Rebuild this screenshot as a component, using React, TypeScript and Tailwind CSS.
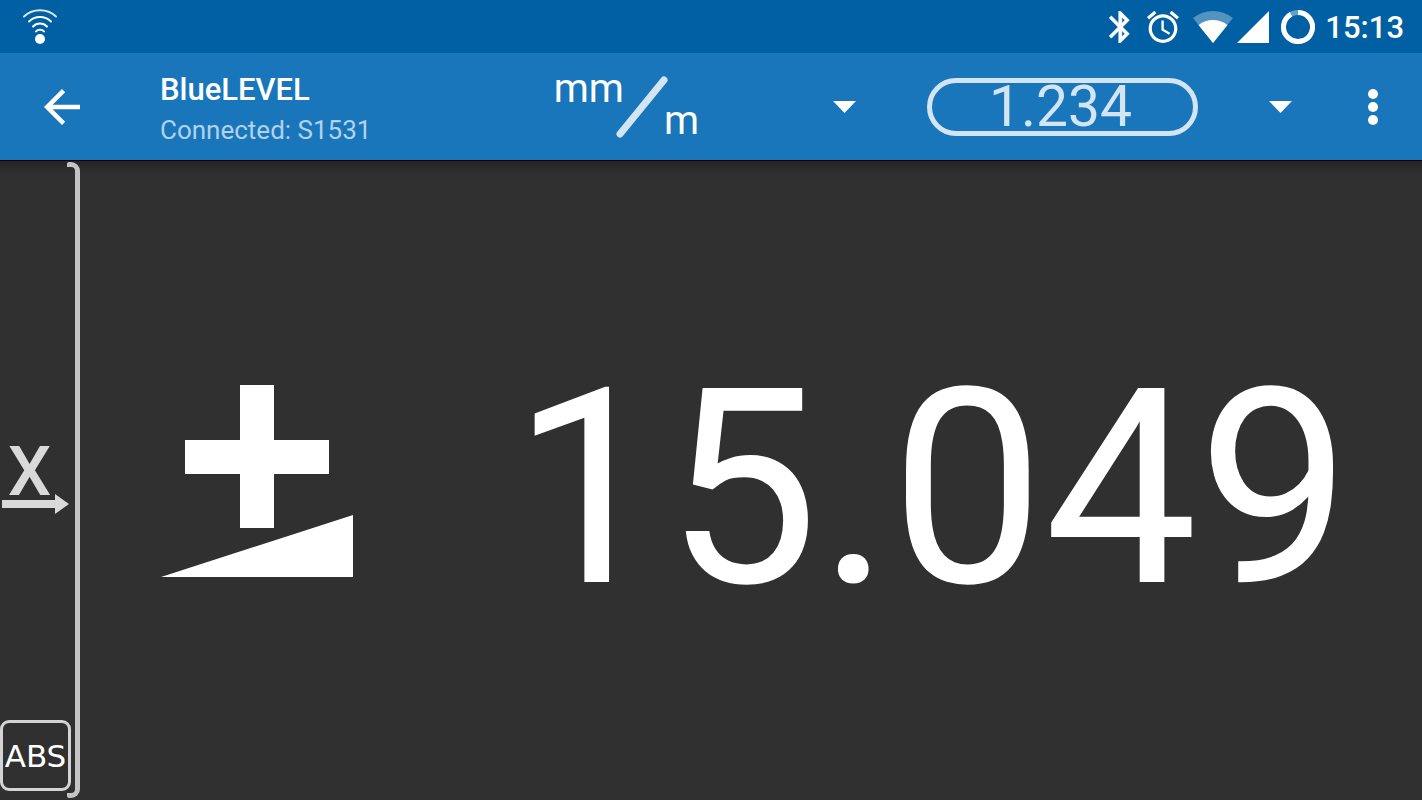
import React, { useState } from 'react';

const UNITS = ['mm/m', 'mm/10in', 'deg', 'mrad'];
const FORMATS = ['1.234', '1.23', '1.2'];

const Caret: React.FC = () => (
  <svg className="w-[23px] h-3 shrink-0 pointer-events-none" viewBox="0 0 23 12" fill="#fff" aria-hidden="true">
    <path d="M0 0h23L11.500 12z" />
  </svg>
);

const BeaconIcon: React.FC = () => (
  <svg className="w-9 h-9" viewBox="0 0 36 36" fill="none" stroke="#fff" strokeWidth="2" strokeLinecap="round" aria-hidden="true">
    <path d="M2 7.500C11 -.8 25 -.8 34 7.500" opacity=".85" />
    <path d="M7 12.500C13 6.500 23 6.500 29 12.500" />
    <path d="M11 17.500C14.500 13.500 21.500 13.500 25 17.500" />
    <path d="M14 22.500C16 20 20 20 22 22.500" />
    <circle cx="18" cy="30" r="5" fill="#fff" stroke="none" />
  </svg>
);

const StatusBar: React.FC = () => (
  <div className="h-[53px] bg-[#0060a3] flex items-center justify-between pl-[22px] pr-[18px]">
    <BeaconIcon />
    <div className="flex items-center text-white">
      {/* Bluetooth */}
      <svg className="w-[21px] h-8" viewBox="5 2 13 20" fill="currentColor" stroke="currentColor" strokeWidth=".3" aria-hidden="true">
        <path d="M17.710 7.710L12 2h-1v7.590L6.410 5 5 6.410 10.590 12 5 17.590 6.410 19 11 14.410V22h1l5.710-5.710-4.300-4.290 4.300-4.290zM13 5.830l1.880 1.880L13 9.590V5.830zm1.880 10.460L13 18.170v-3.760l1.880 1.880z" />
      </svg>
      {/* Alarm */}
      <svg className="w-8 h-8 ml-[17px]" viewBox="2 2 20 20" fill="currentColor" aria-hidden="true">
        <path d="M22 5.720l-4.600-3.860-1.290 1.530 4.600 3.860L22 5.720zM7.880 3.390L6.600 1.860 2 5.710l1.290 1.530 4.590-3.850zM12.500 8H11v6l4.750 2.850.75-1.230-4-2.370V8zM12 4c-4.970 0-9 4.030-9 9s4.020 9 9 9c4.970 0 9-4.030 9-9s-4.030-9-9-9zm0 16c-3.870 0-7-3.130-7-7s3.130-7 7-7 7 3.130 7 7-3.130 7-7 7z" />
      </svg>
      {/* Wi-Fi */}
      <svg className="w-10 h-8 ml-3.5" viewBox="0 0 40 32" fill="currentColor" aria-hidden="true">
        <path d="M20 32L0 7C12 -2.300 28 -2.300 40 7z" opacity=".32" />
        <path d="M20 32L5.500 14C14 7.300 26 7.300 34.500 14z" />
      </svg>
      {/* Signal */}
      <svg className="w-8 h-8 ml-1" viewBox="0 0 32 32" fill="currentColor" aria-hidden="true">
        <path d="M0 32L32 0v32z" />
      </svg>
      {/* Battery */}
      <svg className="w-[34px] h-[34px] ml-3" viewBox="0 0 34 34" fill="none" stroke="currentColor" strokeWidth="5" aria-hidden="true">
        <circle cx="17" cy="17" r="14.500" opacity=".4" />
        <path d="M17 2.500A14.500 14.500 0 1 1 10 4.300" />
      </svg>
      <span className="ml-2.5 pt-0.5 text-[31px] leading-8 font-medium">15:13</span>
    </div>
  </div>
);

const AppBar: React.FC = () => {
  const [unit, setUnit] = useState(UNITS[0]);
  const [format, setFormat] = useState(FORMATS[0]);

  return (
    <header className="h-[107px] bg-[#1976ba] flex items-center text-white">
      <button type="button" aria-label="Back" className="w-[160px] h-full pl-[44px] flex items-center">
        <svg className="w-9 h-9" viewBox="4 4 16 16" fill="currentColor" aria-hidden="true">
          <path d="M20 11H7.830l5.590-5.590L12 4l-8 8 8 8 1.410-1.410L7.830 13H20v-2z" />
        </svg>
      </button>

      <div className="flex-1 min-w-0 pt-1.5">
        <h1 className="text-[31px] leading-10 font-medium">BlueLEVEL</h1>
        <p className="text-[26px] leading-10 text-[#b2d2ea]">Connected: S1531</p>
      </div>

      {/* Unit selector, drawn as a fraction */}
      <label className="relative h-full flex items-center gap-[134px] mr-[71px]">
        <span className="flex items-center h-full text-[40px] leading-10" aria-hidden="true">
          <span className="pb-9">mm</span>
          <svg className="w-[52px] h-[62px] -ml-2 -mr-1" viewBox="0 0 52 62" fill="none" stroke="#d3e5f2" strokeWidth="7" strokeLinecap="round">
            <path d="M4 58L48 4" />
          </svg>
          <span className="pt-7">m</span>
        </span>
        <Caret />
        <select
          aria-label="Unit"
          value={unit}
          onChange={(e) => setUnit(e.target.value)}
          className="absolute inset-0 w-full h-full opacity-0"
        >
          {UNITS.map((u) => <option key={u}>{u}</option>)}
        </select>
      </label>

      <label className="flex items-center gap-[71px] mr-8">
        <select
          aria-label="Number format"
          value={format}
          onChange={(e) => setFormat(e.target.value)}
          className="appearance-none w-[271px] h-[58px] pr-1 rounded-full border-[5px] border-[#d3e5f2] bg-transparent text-[#d3e5f2] text-[57px] leading-[48px] text-center [text-align-last:center]"
        >
          {FORMATS.map((f) => <option key={f}>{f}</option>)}
        </select>
        <Caret />
      </label>

      <button type="button" aria-label="More options" className="w-[98px] h-full flex items-center justify-center">
        <svg className="w-2.5 h-9" viewBox="0 0 10 36" fill="currentColor" aria-hidden="true">
          <circle cx="5" cy="5" r="5" />
          <circle cx="5" cy="18" r="5" />
          <circle cx="5" cy="31" r="5" />
        </svg>
      </button>
    </header>
  );
};

const AxisRail: React.FC = () => (
  <aside className="w-20 flex shrink-0 text-[#d9d9d9]">
    <div className="w-[71px] flex flex-col pb-[9px]">
      <button type="button" aria-label="X axis" className="flex-1 flex flex-col items-start justify-center pt-[74px]">
        <span className="w-[59px] text-center text-[69px] leading-[60px] font-medium">X</span>
        <svg className="w-[68px] h-5 ml-0.5 -mt-2" viewBox="0 0 68 20" fill="currentColor" aria-hidden="true">
          <path d="M0 6h53V0l14 10-14 10v-6H0z" />
        </svg>
      </button>
      <button
        type="button"
        className="h-[71px] rounded-[9px] border-[3px] border-[#d4d4d4] text-white text-[31px] leading-8 font-['DejaVu_Sans',sans-serif]"
      >
        ABS
      </button>
    </div>
    <div className="w-[13px] -ml-1 mt-px mb-0.5 rounded-l-[2px] rounded-r-[9px] border-[5px] border-l-0 border-[#c4c4c4]" />
  </aside>
);

const SlopeSign: React.FC = () => (
  <svg className="w-48 h-48 shrink-0" viewBox="0 0 192 192" fill="#fff" aria-hidden="true">
    <path d="M79 0h34v55h55v34h-55v54H79V89H24V55h55z" />
    <path d="M0 192L192 130v62z" />
  </svg>
);

export default function App() {
  return (
    <div className="min-h-screen flex flex-col bg-[#303030] font-[Roboto,sans-serif]">
      <StatusBar />
      <AppBar />
      <div className="flex-1 flex border-t border-black bg-[linear-gradient(#232323,#303030_12px)]">
        <AxisRail />
        <main className="flex-1 flex items-center justify-between pl-[81px] pr-[71px] text-white">
          <SlopeSign />
          <output className="pt-4 text-[273px] leading-[300px]">15.049</output>
        </main>
      </div>
    </div>
  );
}
